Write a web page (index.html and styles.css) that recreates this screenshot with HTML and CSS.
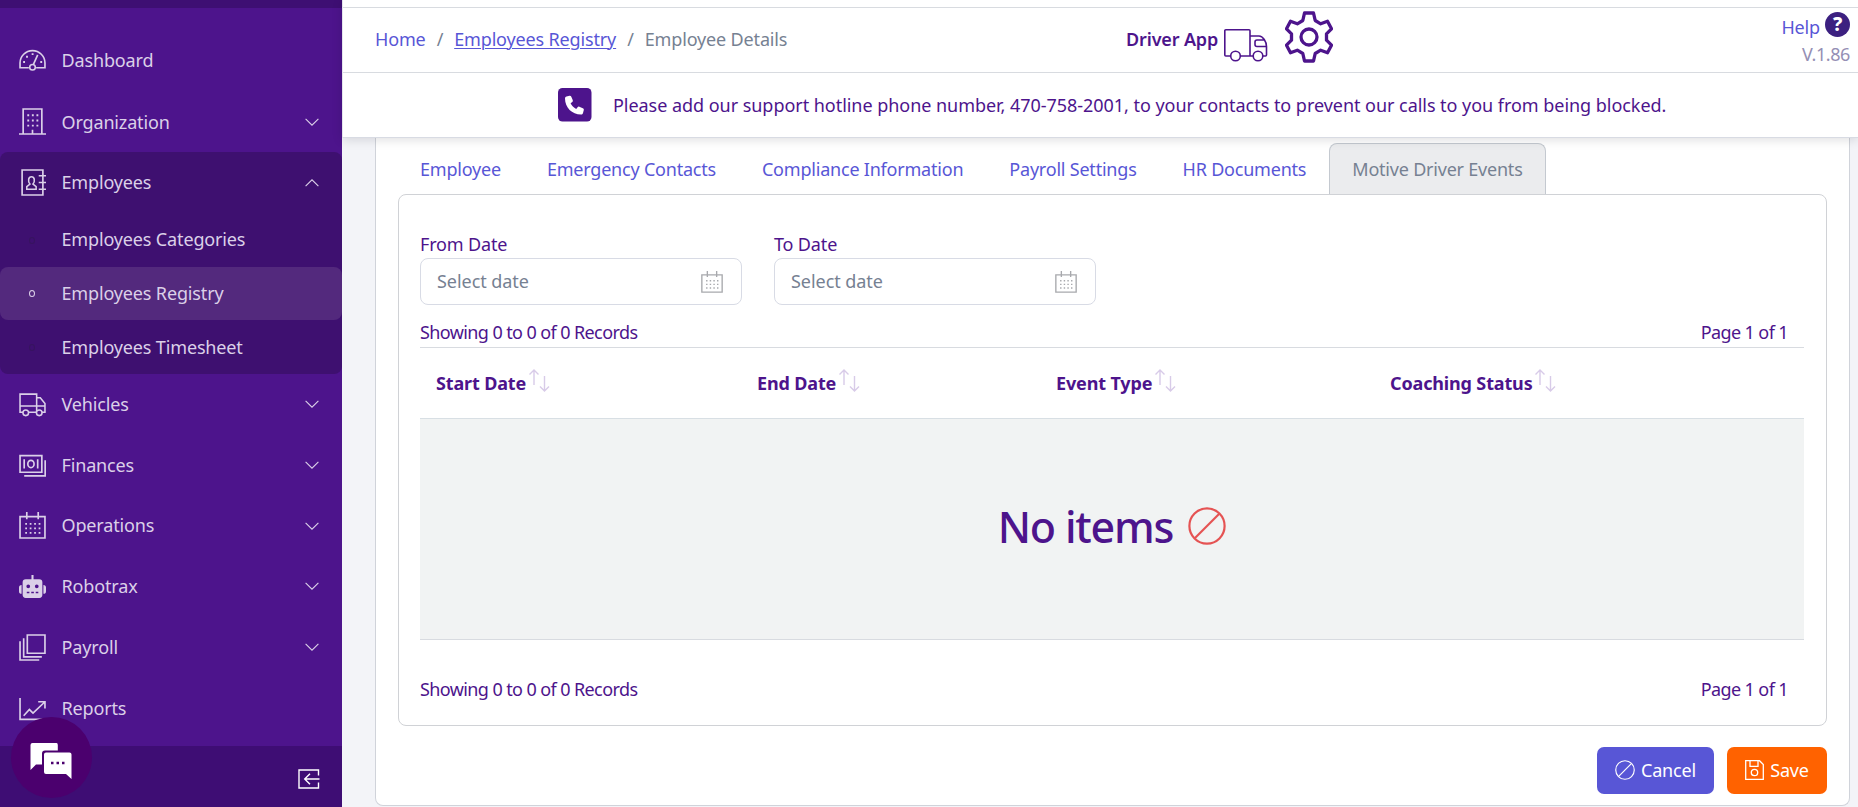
FILE: index.html
```html
<!DOCTYPE html>
<html lang="en">
<head>
    <meta charset="UTF-8">
    <meta name="viewport" content="width=device-width, initial-scale=1.0">
    <title>Employee Details</title>
    <link rel="stylesheet" href="styles.css">
</head>
<body>
    <!-- shared icons -->
    <svg class="sprite" width="0" height="0">
        <symbol id="chevron" viewBox="0 0 14 8"><path d="M.6.8 7 7.2 13.4.8" fill="none" stroke="currentColor" stroke-width="1.1"/></symbol>
        <symbol id="calendar" viewBox="0 0 26 26">
            <path d="M1 4.5h24v20.5H1zM7.5 0v7M18.5 0v7" fill="none" stroke="currentColor" stroke-width="1.6"/>
            <path d="M6 11.5h15M6 15.8h15M6 20h15" fill="none" stroke="currentColor" stroke-width="1.7" stroke-dasharray="1.7 2.6"/>
        </symbol>
        <symbol id="sort" viewBox="0 0 21 23"><path d="M5 16V1M.5 5.5 5 1l4.500 4.500M15.500 7v15M11 17.500l4.500 4.500 4.500-4.500" fill="none" stroke="currentColor" stroke-width="1.4"/></symbol>
        <symbol id="ban" viewBox="0 0 38 38"><path d="M31 7 7 31" stroke="currentColor" stroke-width="2.200"/><circle cx="19" cy="19" r="17.600" fill="none" stroke="currentColor" stroke-width="2.200"/></symbol>
    </svg>

    <div class="sidebar">
        <div class="sidebar-top"></div>
        <div class="nav">
            <a class="nav-link">
                <svg class="nav-icon" viewBox="0 0 26 26"><path d="M9.500 20H1v-4.500a12 12 0 0 1 24 0V20h-8.500M14 16.500l4-9" fill="none" stroke="currentColor" stroke-width="1.600"/><circle cx="13" cy="19.500" r="2.700" fill="none" stroke="currentColor" stroke-width="1.500"/><path d="M4 13.500h1.800v1.800H4zM6.800 8.500h1.800v1.800H6.800zM12.200 6H14v1.800h-1.800zM20.500 13.500h1.800v1.800h-1.800z" fill="currentColor"/></svg>
                <span>Dashboard</span>
            </a>
            <a class="nav-link organization">
                <svg class="nav-icon" viewBox="0 0 26 26"><path d="M0 25h26M4 25V1h18v24M13 25v-4" fill="none" stroke="currentColor" stroke-width="1.600"/><path d="M8 7h11M8 12h11M8 17h11" fill="none" stroke="currentColor" stroke-width="1.800" stroke-dasharray="1.800 2.600"/></svg>
                <span>Organization</span>
                <svg class="arrow"><use href="#chevron"/></svg>
            </a>
            <div class="nav-group">
                <a class="nav-link">
                    <svg class="nav-icon" viewBox="0 0 26 26"><path d="M23 3V1H3v24h20v-2M23 3v20M19 6.500h7M19 13h7M19 19.500h7" fill="none" stroke="currentColor" stroke-width="1.600"/><path d="M7.500 19.500v-2.500l3-2.500c-2.200-3-1.500-7 1.500-7s3.700 4 1.500 7l3 2.500v2.500z" fill="none" stroke="currentColor" stroke-width="1.500"/></svg>
                    <span>Employees</span>
                    <svg class="arrow up"><use href="#chevron"/></svg>
                </a>
                <a class="nav-link sub"><i class="dot"></i><span>Employees Categories</span></a>
                <a class="nav-link sub active"><i class="dot"></i><span>Employees Registry</span></a>
                <a class="nav-link sub"><i class="dot"></i><span>Employees Timesheet</span></a>
            </div>
            <div class="nav-rest">
                <a class="nav-link">
                    <svg class="nav-icon" viewBox="0 0 26 26"><path d="M4 20.500H1V3h16v17.500H9M17 6.500h3.500L25 12v8.500h-3M1 14.500h24" fill="none" stroke="currentColor" stroke-width="1.500"/><circle cx="6.500" cy="21" r="2.700" fill="#4d148c" stroke="currentColor" stroke-width="1.500"/><circle cx="19.500" cy="21" r="2.700" fill="#4d148c" stroke="currentColor" stroke-width="1.500"/></svg>
                    <span>Vehicles</span>
                    <svg class="arrow"><use href="#chevron"/></svg>
                </a>
                <a class="nav-link">
                    <svg class="nav-icon" viewBox="0 0 26 26"><path d="M1 3.500h21v16H1zM25.200 8v15H5M5 7v9M18 7v9" fill="none" stroke="currentColor" stroke-width="1.600"/><ellipse cx="11.500" cy="11.500" rx="3" ry="3.500" fill="none" stroke="currentColor" stroke-width="1.600"/></svg>
                    <span>Finances</span>
                    <svg class="arrow"><use href="#chevron"/></svg>
                </a>
                <a class="nav-link">
                    <svg class="nav-icon"><use href="#calendar"/></svg>
                    <span>Operations</span>
                    <svg class="arrow"><use href="#chevron"/></svg>
                </a>
                <a class="nav-link">
                    <svg class="nav-icon" viewBox="0 0 26 26"><path fill-rule="evenodd" fill="currentColor" d="M12 2h2v4h5.500a3 3 0 0 1 3 3v12a3 3 0 0 1-3 3h-13a3 3 0 0 1-3-3V9a3 3 0 0 1 3-3H12zM8.900 11a1.800 1.800 0 1 0 0 3.600 1.800 1.800 0 0 0 0-3.600zm8.200 0a1.800 1.800 0 1 0 0 3.600 1.800 1.800 0 0 0 0-3.600zM7.500 18v1.600H10V18zm4.300 0v1.600h2.500V18zm4.300 0v1.600h2.500V18zM2.500 11.500v8.500A2.500 2.500 0 0 1 0 17.500V14a2.500 2.500 0 0 1 2.500-2.500zM23.500 11.500v8.500a2.500 2.500 0 0 0 2.500-2.500V14a2.500 2.500 0 0 0-2.500-2.500z"/></svg>
                    <span>Robotrax</span>
                    <svg class="arrow"><use href="#chevron"/></svg>
                </a>
                <a class="nav-link">
                    <svg class="nav-icon" viewBox="0 0 26 26"><path d="M8 1h17v17.500H8zM4.500 4v18H22M1 7v18h18.500" fill="none" stroke="currentColor" stroke-width="1.600"/></svg>
                    <span>Payroll</span>
                    <svg class="arrow"><use href="#chevron"/></svg>
                </a>
                <a class="nav-link reports">
                    <svg class="nav-icon" viewBox="0 0 26 26"><path d="M1 3v20.500h25M4.500 20l5.500-6 3.500 3.500L24.500 7M18.500 6.500H25V13" fill="none" stroke="currentColor" stroke-width="1.600"/></svg>
                    <span>Reports</span>
                </a>
            </div>
        </div>
        <div class="sidebar-footer">
            <svg width="22" height="20" viewBox="0 0 22 20"><path d="M20.500 6.500V1H1v18h19.500v-5.500M21.500 10H6.500M12 4.700 6.700 10l5.300 5.300" fill="none" stroke="#fff" stroke-width="1.400"/></svg>
        </div>
    </div>

    <div class="chat">
        <svg width="42" height="37" viewBox="0 0 42 37"><path d="M2.500 0h23A2 2 0 0 1 27.800 2v5.500H15a3 3 0 0 0-3 3V21.500H6L.500 27V2a2 2 0 0 1 2-2z" fill="#fff"/><path d="M16 9.500h23.500a2 2 0 0 1 2 2V36l-5.500-5H16a2 2 0 0 1-2-2V11.500a2 2 0 0 1 2-2z" fill="#fff"/><path d="M21 18.800h2.500v2.500H21zM26.500 18.800H29v2.500h-2.500zM32 18.800h2.500v2.500H32z" fill="#4b006e"/></svg>
    </div>

    <div class="main">
        <div class="header">
            <div class="header-strip"></div>
            <div class="header-row">
                <div class="breadcrumb">
                    <a>Home</a><i>/</i><a class="current">Employees Registry</a><i>/</i><span>Employee Details</span>
                </div>
                <div class="driver-app">
                    <b>Driver App</b>
                    <svg class="truck" width="44" height="33" viewBox="0 0 44 33"><g fill="none" stroke="#4d148c" stroke-width="1.600"><path d="M6.500 27H1.800a1 1 0 0 1-1-1V1.800a1 1 0 0 1 1-1H25a1 1 0 0 1 1 1V27M16.500 27h12.500M26 7h9c4 0 7.500 6 7.500 10.500V26a1 1 0 0 1-1 1H39M42 17.500H33a2 2 0 0 1-2-2V13a2 2 0 0 1 2-2h7"/><circle cx="11.500" cy="27" r="4.800"/><circle cx="34" cy="27" r="4.800"/></g></svg>
                    <svg class="gear" width="48" height="52" viewBox="0 0 48 52"><g fill="none" stroke="#4d148c" stroke-width="3.300" stroke-linejoin="round"><path d="M19.500 2h9l1.700 7.500 5.500 3.300 6.800-2.500 4 7.500-5 5v6.400l5 5-4 7.500-6.800-2.500-5.500 3.300-1.700 7.500h-9l-1.700-7.500-5.500-3.300-6.800 2.500-4-7.500 5-5v-6.400l-5-5 4-7.500 6.800 2.500 5.500-3.300z"/><circle cx="24" cy="26" r="8"/></g></svg>
                </div>
                <div class="help">
                    <div><a>Help</a><em>?</em></div>
                    <small>V.1.86</small>
                </div>
            </div>
            <div class="notice">
                <svg width="34" height="34" viewBox="0 0 34 34"><rect width="33.500" height="33.500" rx="4.500" fill="#4d148c"/><path d="M7 10.500c0-1 .5-1.700 1.500-2l3-.8c.8-.2 1.500.2 1.800 1l1.500 3.500c.2.700 0 1.300-.5 1.700l-1.700 1.400c1.200 2.600 3 4.400 5.600 5.600l1.400-1.700c.4-.5 1-.7 1.700-.5l3.500 1.500c.8.300 1.200 1 1 1.800l-.8 3c-.3 1-1 1.500-2 1.500C14 26.500 7 19.500 7 10.500z" fill="#fff"/></svg>
                <span>Please add our support hotline phone number, 470-758-2001, to your contacts to prevent our calls to you from being blocked.</span>
            </div>
        </div>

        <div class="card">
            <div class="tabs">
                <a>Employee</a>
                <a>Emergency Contacts</a>
                <a>Compliance Information</a>
                <a>Payroll Settings</a>
                <a>HR Documents</a>
                <a class="active">Motive Driver Events</a>
            </div>
            <div class="tab-content">
                <div class="filters">
                    <div class="field">
                        <label>From Date</label>
                        <div class="input"><span>Select date</span><svg><use href="#calendar"/></svg></div>
                    </div>
                    <div class="field">
                        <label>To Date</label>
                        <div class="input"><span>Select date</span><svg><use href="#calendar"/></svg></div>
                    </div>
                </div>
                <div class="records"><span>Showing 0 to 0 of 0 Records</span><span>Page 1 of 1</span></div>
                <div class="table">
                    <div class="table-head">
                        <div><span>Start Date</span><svg><use href="#sort"/></svg></div>
                        <div><span>End Date</span><svg><use href="#sort"/></svg></div>
                        <div><span>Event Type</span><svg><use href="#sort"/></svg></div>
                        <div><span>Coaching Status</span><svg><use href="#sort"/></svg></div>
                    </div>
                    <div class="empty"><span>No items</span><svg><use href="#ban"/></svg></div>
                </div>
                <div class="records bottom"><span>Showing 0 to 0 of 0 Records</span><span>Page 1 of 1</span></div>
            </div>
            <div class="actions">
                <button class="btn cancel"><svg width="20" height="20"><use href="#ban"/></svg>Cancel</button>
                <button class="btn save"><svg width="19" height="20" viewBox="0 0 19 20"><path d="M.7.700h13.800l3.800 3.800v14.800H.7zM5 .700v5.600h8V.700" fill="none" stroke="currentColor" stroke-width="1.300"/><circle cx="9.500" cy="12.500" r="3.200" fill="none" stroke="currentColor" stroke-width="1.300"/></svg>Save</button>
            </div>
        </div>
    </div>
</body>
</html>
```

FILE: styles.css
```css
* {
    box-sizing: border-box;
}

body {
    margin: 0;
    height: 807px;
    overflow: hidden;
    display: flex;
    background-color: #f3f4f8;
    color: #4d148c;
    font-family: "Noto Sans", "Open Sans", sans-serif;
    font-size: 18px;
    line-height: 28px;
    letter-spacing: -0.15px;
}

.sprite {
    position: absolute;
}

/* sidebar */
.sidebar {
    width: 342px;
    height: 807px;
    flex: none;
    display: flex;
    flex-direction: column;
    background-color: #4d148c;
}

.sidebar-top {
    height: 8px;
    flex: none;
    background-color: #3e0f73;
}

.nav {
    flex: 1;
    min-height: 0;
    overflow: hidden;
    padding-top: 22px;
}

.nav-link {
    height: 61px;
    display: flex;
    align-items: center;
    padding: 0 23px 0 19px;
    color: #dbd0e8;
}

.nav-link span {
    margin-bottom: 2px;
}

.nav-link.organization span {
    margin-bottom: 0;
}

.nav-icon {
    width: 27px;
    height: 27px;
    flex: none;
    margin-right: 15.5px;
}

.arrow {
    width: 14px;
    height: 8px;
    margin-left: auto;
}

.arrow.up {
    transform: rotate(180deg);
}

.nav-group {
    background-color: #3e1070;
    border-radius: 8px;
    height: 222px;
}

.nav-link.sub {
    height: 54px;
}

.nav-link.sub.active {
    height: 53px;
    background-color: #53297d;
    border-radius: 8px;
}

.nav-link.sub:last-child {
    height: 55px;
}

.dot {
    width: 6px;
    height: 7px;
    margin: 0 26.5px 0 10px;
    border: 1px solid #37145f;
    border-radius: 50%;
}

.sub.active .dot {
    border-color: #dbd0e8;
}

.nav-rest .nav-link {
    height: 60.7px;
}

.nav-rest .nav-link span {
    margin-bottom: 1px;
}

.nav-rest .reports {
    margin-top: 1px;
}

.sidebar-footer {
    height: 61px;
    flex: none;
    display: flex;
    justify-content: flex-end;
    padding: 23px 22px 0 0;
    background-color: #3e0d74;
}

.chat {
    position: absolute;
    left: 11px;
    top: 717px;
    width: 81px;
    height: 81px;
    border-radius: 50%;
    background-color: #4b006e;
    padding: 26px 0 0 19px;
}

/* header */
.main {
    flex: 1;
    min-width: 0;
}

.header {
    position: relative;
    height: 138px;
    background-color: #fff;
    border-left: 1px solid #e4e5ec;
    border-bottom: 1px solid #d8dbe3;
    box-shadow: 0 2px 10px rgba(0, 0, 21, 0.13);
}

.header-strip {
    height: 8px;
    border-bottom: 1px solid #d8dbe0;
}

.header-row {
    height: 65px;
    display: flex;
    border-bottom: 1px solid #d8dbe0;
}

.breadcrumb {
    width: 783px;
    padding: 17px 0 0 32px;
    color: #768192;
}

.breadcrumb a,
.tabs a,
.help a {
    color: #5856d6;
}

.breadcrumb i {
    font-style: normal;
    margin: 0 11px;
}

.breadcrumb .current {
    text-decoration: underline;
    text-decoration-thickness: 1px;
    text-underline-offset: 2px;
}

.driver-app {
    display: flex;
}

.driver-app b {
    width: 98px;
    font-weight: 600;
    padding-top: 17px;
}

.truck {
    margin-top: 21px;
}

.gear {
    margin: 3px 0 0 17px;
}

.help {
    margin-left: auto;
    padding-right: 8px;
    text-align: right;
}

.help div {
    display: flex;
    justify-content: flex-end;
    height: 32px;
    padding-top: 4px;
}

.help a {
    padding-top: 1px;
}

.help em {
    width: 25px;
    height: 25px;
    margin-left: 5px;
    border-radius: 50%;
    background-color: #3c2080;
    color: #fff;
    font-size: 19px;
    line-height: 25px;
    font-weight: 800;
    font-style: normal;
    text-align: center;
}

.help small {
    display: block;
    font-size: 18px;
    letter-spacing: -0.4px;
    color: #958fb4;
}

.notice {
    height: 64px;
    display: flex;
    padding: 15px 0 0 215px;
    letter-spacing: -0.04px;
}

.notice span {
    margin-left: 21px;
    padding-top: 3px;
    white-space: nowrap;
}

/* card */
.card {
    width: 1475px;
    height: 668px;
    margin-left: 33px;
    padding: 5px 22px 0;
    background-color: #fff;
    border: 1px solid #d0d3da;
    border-top: 0;
    border-radius: 0 0 8px 8px;
}

.tabs {
    display: flex;
    height: 51px;
    letter-spacing: -0.21px;
}

.tabs a {
    padding: 11px 22px;
    border: 1px solid transparent;
    border-bottom: 0;
    white-space: nowrap;
}

.tabs a:first-child {
    padding-left: 21px;
}

.tabs .active {
    color: #768192;
    background-color: #ebecee;
    border-color: #c4c9d0;
    border-radius: 8px 8px 0 0;
}

.tab-content {
    height: 532px;
    padding: 35px 22px 0 21px;
    border: 1px solid #d0d2d6;
    border-radius: 8px;
}

.filters {
    display: flex;
    gap: 32px;
}

.field {
    width: 322px;
}

.field label {
    display: block;
}

.input {
    height: 47px;
    display: flex;
    align-items: center;
    justify-content: space-between;
    padding: 0 18.5px 2px 16px;
    border: 1px solid #d8dbe5;
    border-radius: 8px;
    color: #768192;
    letter-spacing: -0.05px;
}

.input svg {
    width: 22px;
    height: 22px;
    margin-top: 3px;
    color: #a8a9ad;
}

.records {
    display: flex;
    justify-content: space-between;
    padding: 13px 16px 0 0;
    height: 42px;
    letter-spacing: -0.6px;
}

.records.bottom {
    padding-top: 35px;
}

.table-head {
    height: 71px;
    display: grid;
    grid-template-columns: 321px 299px 334px 1fr;
    border-top: 1px solid #d8dbe0;
    font-weight: 700;
}

.table-head div {
    display: flex;
    padding: 21px 0 0 16px;
}

.table-head svg {
    width: 21px;
    height: 23px;
    margin-left: 2.5px;
    color: #d8cbe8;
}

.table-head span {
    white-space: nowrap;
}

.empty {
    height: 222px;
    display: flex;
    align-items: center;
    justify-content: center;
    background-color: #f1f3f3;
    border-top: 1px solid #d8dfe4;
    border-bottom: 1px solid #d8dbe0;
    font-size: 43px;
    font-weight: 500;
    letter-spacing: -1.2px;
}

.empty span {
    margin-bottom: 4px;
}

.empty svg {
    width: 38px;
    height: 38px;
    margin: 0 0 6px 15px;
    color: #e55353;
}

.actions {
    display: flex;
    justify-content: flex-end;
    gap: 13px;
    padding-top: 21px;
}

.btn {
    height: 47px;
    display: flex;
    align-items: center;
    justify-content: center;
    gap: 6px;
    padding-bottom: 2px;
    border: 0;
    border-radius: 7px;
    color: #fff;
    font: inherit;
    letter-spacing: inherit;
}

.cancel {
    width: 117px;
    background-color: #5856d6;
}

.save {
    width: 100px;
    background-color: #ff6200;
}
```
